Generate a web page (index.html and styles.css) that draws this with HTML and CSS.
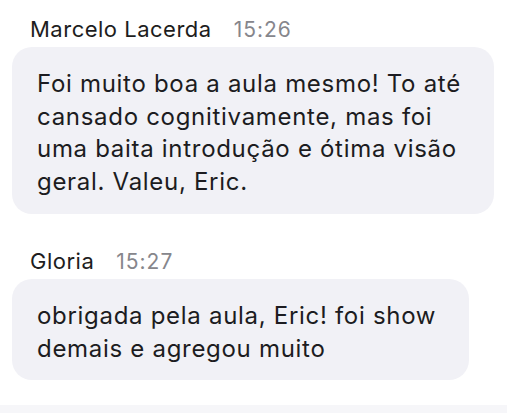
FILE: index.html
```html
<!DOCTYPE html>
<html lang="pt-BR">
<head>
  <meta charset="UTF-8">
  <title>Chat</title>
  <link rel="stylesheet" href="styles.css">
</head>
<body>
<div class="chat">
  <div class="msg">
    <div class="msg-head">
      <span class="msg-name">Marcelo Lacerda</span>
      <span class="msg-time">15:26</span>
    </div>
    <div class="bubble">Foi muito boa a aula mesmo! To até<br>cansado cognitivamente, mas foi<br>uma baita introdução e ótima visão<br>geral. Valeu, Eric.</div>
  </div>
  <div class="msg">
    <div class="msg-head">
      <span class="msg-name">Gloria</span>
      <span class="msg-time">15:27</span>
    </div>
    <div class="bubble">obrigada pela aula, Eric! foi show<br>demais e agregou muito</div>
  </div>
</div>
<div class="composer"></div>
</body>
</html>
```

FILE: styles.css
```css
* {
  margin: 0;
  padding: 0;
  box-sizing: border-box;
}
body {
  background-color: #fff;
  font-family: Inter, "Noto Sans", sans-serif;
  color: #1c1c21;
  overflow: hidden;
}

.chat {
  padding: 0 11px 0 12px;
}

.msg {
  display: flex;
  flex-direction: column;
  align-items: flex-start;
  margin-top: 35px;
}
.msg:first-child {
  margin-top: 17px;
}

.msg-head {
  display: flex;
  align-items: baseline;
  gap: 22px;
  padding-left: 18px;
  line-height: 24px;
  margin-bottom: 5px;
}
.msg-name {
  font-size: 22px;
  letter-spacing: 0.5px;
  color: #1d1d20;
}
.msg-time {
  font-size: 21px;
  letter-spacing: 1px;
  color: #86868c;
}

.bubble {
  background-color: #f1f1f6;
  border-radius: 20px;
  padding: 21px 33px 15px 25px;
  font-size: 24px;
  letter-spacing: 0.7px;
  line-height: 32.7px;
}

.composer {
  margin-top: 25px;
  height: 40px;
  background-color: #f6f6f9;
}
```
